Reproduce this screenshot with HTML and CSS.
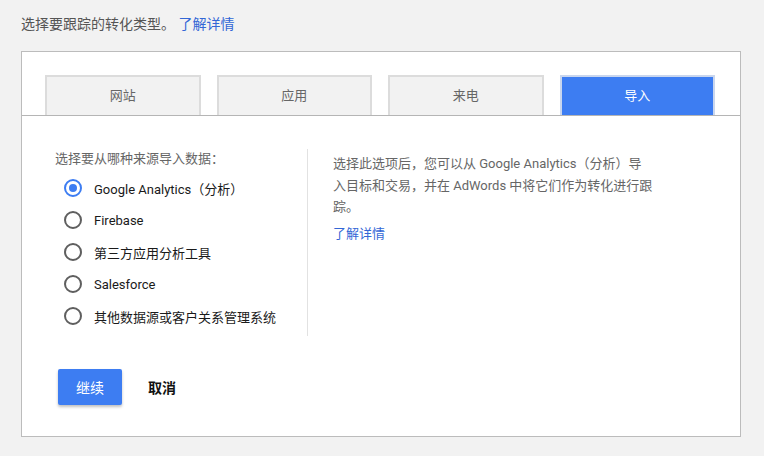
FILE: index.html
```html
<!DOCTYPE html>
<html lang="zh-CN">
<head>
<meta charset="utf-8">
<title>转化类型</title>
<link rel="stylesheet" href="styles.css">
</head>
<body>
<div class="page">
  <p class="intro">选择要跟踪的转化类型。 <a class="link" href="#">了解详情</a></p>
  <div class="card">
    <div class="tabs">
      <div class="tab">网站</div>
      <div class="tab">应用</div>
      <div class="tab">来电</div>
      <div class="tab active">导入</div>
    </div>
    <div class="content">
      <div class="sources">
        <div class="sources-title">选择要从哪种来源导入数据：</div>
        <label class="radio-row"><span class="radio checked"></span><span class="radio-label">Google Analytics（分析）</span></label>
        <label class="radio-row"><span class="radio"></span><span class="radio-label">Firebase</span></label>
        <label class="radio-row"><span class="radio"></span><span class="radio-label">第三方应用分析工具</span></label>
        <label class="radio-row"><span class="radio"></span><span class="radio-label">Salesforce</span></label>
        <label class="radio-row"><span class="radio"></span><span class="radio-label">其他数据源或客户关系管理系统</span></label>
      </div>
      <div class="desc">
        <p class="desc-text">选择此选项后，您可以从 Google Analytics（分析）导入目标和交易，并在 AdWords 中将它们作为转化进行跟踪。</p>
        <a class="link desc-link" href="#">了解详情</a>
      </div>
    </div>
    <div class="actions">
      <button class="btn-primary">继续</button>
      <button class="btn-text">取消</button>
    </div>
  </div>
</div>
</body>
</html>
```

FILE: styles.css
```css
html, body {
  margin: 0;
  padding: 0;
  background: #f2f2f2;
}
body {
  font-family: Roboto, "Noto Sans CJK SC", "Liberation Sans", sans-serif;
  color: #333;
}
.page {
  padding: 14px 21px 0 21px;
  width: 722px;
}
.intro {
  margin: 0;
  height: 20px;
  line-height: 20px;
  font-size: 14px;
  color: #555;
}
.link {
  color: #3367d6;
  text-decoration: none;
}
.card {
  margin-top: 17px;
  width: 718px;
  height: 384px;
  background: #fff;
  border: 1px solid #bcbcbc;
}
.tabs {
  display: flex;
  gap: 16px;
  margin-top: 23px;
  border-bottom: 1px solid #b5b5b5;
  padding: 0 25px 0 23px;
}
.tab {
  flex: 1;
  height: 38px;
  line-height: 38px;
  text-align: center;
  font-size: 13px;
  color: #666;
  background: #f2f2f2;
  border: 2px solid #dcdcdc;
  border-bottom: none;
}
.tab.active {
  background: #3d7df2;
  border-color: #c9d6ee;
  color: #fff;
}
.content {
  display: flex;
  padding: 33px 0 0 33px;
}
.sources {
  width: 252px;
  border-right: 1px solid #e2e2e2;
  padding-bottom: 4px;
}
.sources-title {
  height: 20px;
  line-height: 20px;
  font-size: 13px;
  color: #666;
  margin-bottom: 3px;
}
.radio-row {
  display: flex;
  align-items: center;
  height: 32px;
  padding-left: 9px;
  gap: 12px;
}
.radio {
  box-sizing: border-box;
  width: 18px;
  height: 18px;
  border-radius: 50%;
  border: 2px solid #5f5f5f;
  display: flex;
  align-items: center;
  justify-content: center;
}
.radio.checked {
  border-color: #3d7df2;
}
.radio.checked::after {
  content: "";
  width: 8px;
  height: 8px;
  border-radius: 50%;
  background: #3d7df2;
}
.radio-label {
  font-size: 13px;
  color: #1a1a1a;
}
.desc {
  padding: 4px 0 0 25px;
  width: 320px;
}
.desc-text {
  margin: 0;
  font-size: 13px;
  line-height: 21.5px;
  color: #666;
}
.desc-link {
  display: block;
  margin-top: 5px;
  font-size: 13px;
  line-height: 21px;
}
.actions {
  display: flex;
  align-items: center;
  gap: 10px;
  margin: 33px 0 0 36px;
}
.btn-primary {
  width: 64px;
  height: 36px;
  border: none;
  border-radius: 2px;
  background: #3d7df2;
  color: #fff;
  font-family: inherit;
  font-size: 14px;
  box-shadow: 0 2px 3px rgba(0, 0, 0, 0.25);
  padding: 0;
}
.btn-text {
  height: 36px;
  border: none;
  background: transparent;
  font-family: inherit;
  font-size: 14px;
  font-weight: 700;
  color: #111;
  padding: 0 16px;
}
```
